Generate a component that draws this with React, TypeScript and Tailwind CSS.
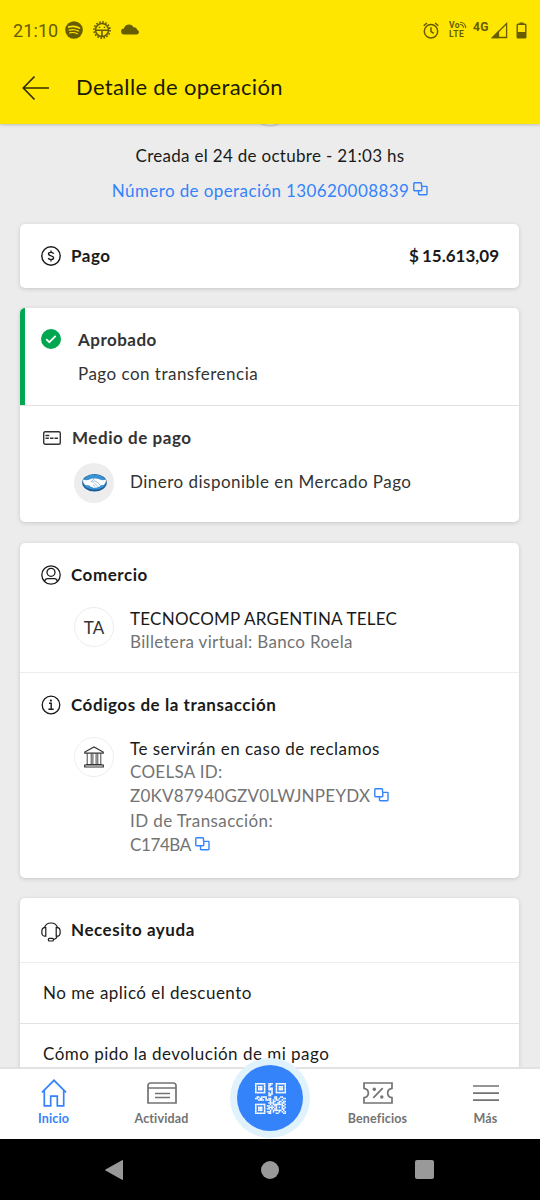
import type { ReactNode } from 'react';

function CopyIcon({ className = '' }: { className?: string }) {
  return (
    <svg className={className} width="15" height="14" viewBox="0 0 15 14" fill="none" stroke="#3483fa" strokeWidth="1.4">
      <path d="M5 8.7H1.5a.7.7 0 0 1-.7-.7V1.5a.7.7 0 0 1 .7-.7h6.3a.7.7 0 0 1 .7.7v2.7" />
      <path d="M8.8 4.4h4.5a.7.7 0 0 1 .7.7v7a.7.7 0 0 1-.7.7H6.2a.7.7 0 0 1-.7-.7V8.7h2.6a.7.7 0 0 0 .7-.7z" />
    </svg>
  );
}

function MoneyIcon() {
  return (
    <svg width="20" height="20" viewBox="0 0 20 20" fill="none" stroke="#1a1a1a" strokeWidth="1.4">
      <circle cx="10" cy="10" r="9.2" />
      <path d="M12.6 7.900c-.3-1-1.300-1.500-2.600-1.500-1.500 0-2.500.6-2.500 1.700 0 1.200 1.200 1.500 2.500 1.800s2.600.7 2.600 1.900c0 1.100-1.100 1.800-2.600 1.800-1.400 0-2.400-.6-2.700-1.600M10 4.600v1.800M10 13.600v1.800" />
    </svg>
  );
}

function CheckIcon() {
  return (
    <svg width="20" height="20" viewBox="0 0 20 20" fill="none">
      <circle cx="10" cy="10" r="10" fill="#00a650" />
      <path d="m5.200 10.100 3.100 3.100 6.400-6.300" stroke="#fff" strokeWidth="1.700" />
    </svg>
  );
}

function CardIcon() {
  return (
    <svg className="mr-px" width="18" height="14" viewBox="0 0 18 14" fill="none" stroke="#333" strokeWidth="1.400">
      <rect x=".7" y=".7" width="16.600" height="12.600" rx="1.500" />
      <path d="M2.500 4.500h3.800M2.500 7.300h3.400M7 7.300h3.500M11.500 7.300H15" strokeWidth="1.400" />
    </svg>
  );
}

function UserIcon() {
  return (
    <svg width="20" height="20" viewBox="0 0 20 20" fill="none" stroke="#1a1a1a" strokeWidth="1.300">
      <circle cx="10" cy="10" r="9.200" />
      <circle cx="10" cy="7.300" r="4" />
      <path d="M3.600 16.300c.4-1.700 1.400-2.700 3-2.700h6.800c1.600 0 2.600 1 3 2.700" />
    </svg>
  );
}

function InfoIcon() {
  return (
    <svg width="20" height="20" viewBox="0 0 20 20" fill="none" stroke="#1a1a1a" strokeWidth="1.300">
      <circle cx="10" cy="10" r="8.800" />
      <path d="M8 8.300h2.200v5.600M7.400 14.200h5.300" strokeWidth="1.400" />
      <circle cx="9.900" cy="5.600" r="1.100" fill="#1a1a1a" stroke="none" />
    </svg>
  );
}

function HeadsetIcon() {
  return (
    <svg className="mt-[3px]" width="20" height="20" viewBox="0 0 20 20" fill="none" stroke="#1a1a1a" strokeWidth="1.200">
      <path d="M3.400 5.700C4.300 2.800 6.800 1 10 1s5.700 1.800 6.600 4.700" />
      <path d="M4.800 5.600v8.500H3.600C1.800 14.100.8 12.400.8 9.900s1-4.300 2.800-4.300zM15.200 5.600v8.500h1.200c1.800 0 2.800-1.700 2.800-4.200s-1-4.300-2.800-4.300z" />
      <path d="M16.300 14.200c-.6 1.700-1.900 2.900-3.800 3.300" />
      <rect x="7.300" y="16.300" width="5.200" height="2.700" rx="1.300" />
    </svg>
  );
}

function BankIcon() {
  return (
    <svg width="20" height="22" viewBox="0 0 20 22" fill="none" stroke="#333">
      <path d="M.8 7.200V6L10 1l9.200 5v1.200zM.7 21v-2h18.600v2z" strokeWidth="1.200" />
      <path d="M2 18.500h16" strokeWidth="1" />
      <path d="M3.200 7.500v11M7.200 7.500v11M8.900 7.500v11M12.100 7.500v11M13.800 7.500v11M16.800 7.500v11" strokeWidth=".9" />
    </svg>
  );
}

function HandshakeLogo() {
  return (
    <svg className="-mt-px" width="25" height="19" viewBox="0 0 26 19">
      <ellipse cx="13" cy="9.700" rx="12.800" ry="9.100" fill="#1c5c9c" />
      <ellipse cx="13" cy="9" rx="11.800" ry="7.900" fill="#3a92d0" />
      <path d="M1.300 6.500c2.600 1 4.700.7 7.200-.5 1.300-.6 2.600-.8 4-.3 1.500-.6 3-.4 4.500.2 2.700 1.100 5 1.600 7.700.6.6 2-.3 4-2 5.500l-3.400.3c-.4 1.500-1.700 1.900-2.700 1.600-.7 1.200-2 1.500-3 .8-1.300.8-2.300.4-2.900-.5-1.300.3-2.400-.3-2.700-1.500l-4.400-.6C1.500 10.800.8 8.700 1.300 6.500z" fill="#fff" />
      <path d="M12.500 6c-1.300.7-2 1.600-2.800 2.600 1.300.9 2.700.3 3.600-.8 2 .7 4.200 2.700 5.800 4.500M13 10.300l3 2.700M11.500 11.800l2.200 2.200" fill="none" stroke="#2a6cae" strokeWidth=".5" />
    </svg>
  );
}

function SpotifyIcon() {
  return (
    <svg width="18" height="18" viewBox="0 0 18 18" fill="none">
      <circle cx="9" cy="9" r="8.800" fill="#665c00" />
      <path d="M3.600 6.100c3.700-1.100 7.700-.8 11 1" stroke="#ffe600" strokeWidth="1.600" strokeLinecap="round" />
      <path d="M4.200 9.100c3.200-.9 6.500-.6 9.300.9" stroke="#ffe600" strokeWidth="1.300" strokeLinecap="round" />
      <path d="M4.700 11.900c2.700-.7 5.300-.4 7.700.8" stroke="#ffe600" strokeWidth="1.100" strokeLinecap="round" />
    </svg>
  );
}

function GearIcon() {
  return (
    <svg width="18" height="18" viewBox="0 0 18 18" fill="none" stroke="#665c00">
      <circle cx="9" cy="9" r="8" strokeWidth="1.800" strokeDasharray="1.570 1.570" />
      <circle cx="9" cy="9" r="6.500" strokeWidth="1.500" />
      <path d="M2.500 9.300h13M9 9.300v6.200" strokeWidth="1.600" />
      <path d="M5.700 6.300h1.600M10.700 6.300h1.600" strokeWidth="1.300" />
    </svg>
  );
}

function StatusBar() {
  return (
    <div className="flex h-[60px] items-center px-[13px] text-[#665c00]">
      <span className="mt-[2px] w-[52px] whitespace-nowrap font-[Roboto,sans-serif] text-[18px] leading-6 tracking-[0.1px]">21:10</span>
      <SpotifyIcon />
      <div className="ml-[10px]">
        <GearIcon />
      </div>
      <svg className="ml-[10px] mt-[-2px]" width="18" height="11" viewBox="0 0 18 11" fill="#665c00">
        <path d="M3.200 10.400a2.900 2.900 0 0 1-.3-5.800C3.600 2 5.700.5 8 .5c2.100 0 3.800 1.200 4.600 3 .4-.2.9-.2 1.300-.1 1.300.2 2 1.200 2.100 2.400 1.200.3 1.900 1.300 1.900 2.400 0 1.300-1 2.200-2.300 2.200z" />
      </svg>
      <div className="ml-auto flex items-center">
        <svg width="16" height="17" viewBox="0 0 16 17" fill="none" stroke="#665c00" strokeWidth="1.500">
          <circle cx="8" cy="9.300" r="6.700" />
          <path d="M8 5.300v4.200l2.800 1.900M.7 3.700 3.900 1M15.300 3.700 12.100 1" />
        </svg>
        <div className="relative ml-[10px] w-[18px] font-[Roboto,sans-serif] text-[8.5px] font-bold leading-[9px]">
          <div>Vo</div>
          <div>LTE</div>
          <svg className="absolute left-[10px] top-0" width="8" height="8" viewBox="0 0 8 8" fill="none" stroke="#665c00" strokeWidth="1.100">
            <path d="M1 1.300c3.200 0 5.600 2.300 5.700 5.700M1.200 3.500c1.900 0 3.200 1.300 3.300 3.300" />
          </svg>
        </div>
        <span className="-mt-[7px] ml-[6px] w-[18px] font-[Roboto,sans-serif] text-[12px] font-bold leading-3">4G</span>
        <svg width="17" height="17" viewBox="0 0 17 17" fill="none" stroke="#665c00" strokeWidth="1.300">
          <path d="M15.600 1.500v14H1.600z" />
          <path d="M7.500 9.600v5.900H1.600z" fill="#665c00" />
        </svg>
        <svg className="ml-[8px]" width="11" height="17" viewBox="0 0 11 17" fill="none">
          <path d="M3.500.5h4v2h-4z" fill="#665c00" />
          <rect x="1.200" y="2.200" width="8.600" height="13.600" rx=".8" stroke="#665c00" strokeWidth="1.400" />
          <path d="M1 10h9v6H1z" fill="#665c00" />
        </svg>
      </div>
    </div>
  );
}

function Header() {
  return (
    <header className="relative z-10 h-[124px] bg-[#ffe600] shadow-[0_1px_3px_rgba(0,0,0,0.2)]">
      <StatusBar />
      <div className="flex h-14 items-center pl-[22px]">
        <svg width="28" height="26" viewBox="0 0 28 26" fill="none" stroke="#332e00" strokeWidth="1.700">
          <path d="M27 13H1.500M12.500 1.500 1.300 13l11.200 11.500" />
        </svg>
        <h1 className="-mt-[2px] ml-[26px] whitespace-nowrap text-[22px] leading-7 tracking-[0.35px] text-[#1a1a00]">Detalle de operación</h1>
      </div>
    </header>
  );
}

function Card({ className = '', children }: { className?: string; children: ReactNode }) {
  return (
    <section className={`mr-[21px] ml-5 overflow-hidden rounded-[5px] bg-white shadow-[0_1px_4px_rgba(0,0,0,0.16)] ${className}`}>
      {children}
    </section>
  );
}

function SectionTitle({ icon, children }: { icon: ReactNode; children: ReactNode }) {
  return (
    <div className="flex items-center pl-[21px]">
      {icon}
      <h2 className="ml-[10px] font-bold leading-6 tracking-[0.55px]">{children}</h2>
    </div>
  );
}

function Avatar({ className = '', children }: { className?: string; children: ReactNode }) {
  return (
    <div className={`ml-[54px] flex size-10 shrink-0 items-center justify-center rounded-full ${className}`}>{children}</div>
  );
}

const QR_ROWS = [
  '111111100111001111111',
  '100000100110001000001',
  '101110100100001011101',
  '101110100111001011101',
  '101110100111001011101',
  '100000100001001000001',
  '111111100101001111111',
  '000000000111000000000',
  '000000000110000000000',
  '011011110000011001100',
  '110110010110011010011',
  '001111011110101100100',
  '000000000010110011011',
  '000000000111100110110',
  '111111100010111111101',
  '100000101101011000110',
  '101110100111101010101',
  '101110101101011000110',
  '101110100010111111010',
  '100000101110100010101',
  '111111100110001100011',
];

function QrIcon() {
  return (
    <svg width="31" height="31" viewBox="0 0 21 21" fill="#fff">
      {QR_ROWS.map((row, y) =>
        row.split('').map((bit, x) => (bit === '1' ? <rect key={`${x}-${y}`} x={x} y={y} width="1.05" height="1.05" /> : null)),
      )}
    </svg>
  );
}

function NavItem({ icon, label, active = false }: { icon: ReactNode; label: string; active?: boolean }) {
  return (
    <div className={`flex flex-col items-center pr-px ${active ? 'text-[#3483fa]' : 'text-[#737373]'}`}>
      <div className="flex h-[42px] items-center pt-[5px]">{icon}</div>
      <span className="text-[12.5px] font-bold leading-4 tracking-[0.15px]">{label}</span>
    </div>
  );
}

function BottomNav() {
  return (
    <nav className="relative grid h-[72px] grid-cols-5 border-t-2 border-[#e2e2e2] bg-white">
      <NavItem
        active
        label="Inicio"
        icon={
          <svg width="26" height="28" viewBox="0 0 26 28" fill="none" stroke="currentColor" strokeWidth="1.700">
            <path d="M1 13.300 13 1.300l12 12M3.300 11.500v15.300h6.400v-9.600h6.600v9.600h6.400V11.500" />
          </svg>
        }
      />
      <NavItem
        label="Actividad"
        icon={
          <svg width="30" height="22" viewBox="0 0 30 22" fill="none" stroke="currentColor" strokeWidth="1.700">
            <path d="M1 21V3.500A2.500 2.500 0 0 1 3.500 1h23A2.500 2.500 0 0 1 29 3.500V21zM1 6h28M8 11.500h15M8 15.500h15" />
          </svg>
        }
      />
      <div />
      <NavItem
        label="Beneficios"
        icon={
          <svg width="30" height="22" viewBox="0 0 30 22" fill="none" stroke="currentColor" strokeWidth="1.700">
            <path d="M1 1h28v5.300c-5.800.9-5.800 8.500 0 9.400V21H1v-5.300c5.800-.9 5.800-8.500 0-9.400zM10.300 15.800l9.400-9.600" />
            <circle cx="11.300" cy="7.200" r="1.700" fill="currentColor" stroke="none" />
            <circle cx="18.800" cy="15" r="1.700" fill="currentColor" stroke="none" />
          </svg>
        }
      />
      <NavItem
        label="Más"
        icon={
          <svg width="26" height="18" viewBox="0 0 26 18" fill="none" stroke="currentColor" strokeWidth="1.700">
            <path d="M0 2h26M0 9.200h26M0 16.200h26" />
          </svg>
        }
      />
      <div className="absolute -top-[11px] left-[230px] flex size-20 items-center justify-center rounded-full bg-[#e0f2fc]">
        <div className="flex size-[66px] items-center justify-center rounded-full bg-[#3483fa]">
          <QrIcon />
        </div>
      </div>
    </nav>
  );
}

function SystemBar() {
  return (
    <div className="grid h-[61px] grid-cols-[228px_84px_228px] items-center justify-items-center bg-black">
      <svg width="20" height="22" viewBox="0 0 20 22" fill="#999">
        <path d="M18 1.200c.6-.3 1 0 1 .6v18.400c0 .6-.4.9-1 .6L1.500 11.600c-.6-.4-.6-.8 0-1.200z" />
      </svg>
      <div className="size-[18px] rounded-full bg-[#999]" />
      <div className="ml-[-4px] size-[19px] rounded-[2px] bg-[#999]" />
    </div>
  );
}

export default function App() {
  return (
    <div className="flex h-[1200px] w-[540px] flex-col overflow-hidden bg-[#ececec] font-[Lato,sans-serif] text-[17px] leading-6 tracking-[0.48px] text-[#1a1a1a]">
      <Header />

      <main className="relative h-[943px] overflow-hidden">
        <div className="absolute -top-[39px] left-[250px] size-10 rounded-full bg-[#f5f5f5] shadow-[0_1px_2px_rgba(0,0,0,0.2)]" />
        <p className="mt-5 text-center tracking-[0.3px]">Creada el 24 de octubre - 21:03 hs</p>
        <p className="mt-[11px] flex justify-center tracking-[0.4px] text-[#3483fa]">
          Número de operación 130620008839
          <CopyIcon className="ml-1 mt-[3px]" />
        </p>

        <Card className="mt-[21px] flex h-16 items-center justify-between pr-5">
          <SectionTitle icon={<MoneyIcon />}>Pago</SectionTitle>
          <span className="font-bold tracking-normal [word-spacing:-1px]">$ 15.613,09</span>
        </Card>

        <Card className="mt-5 h-[214px] text-[#333]">
          <div className="flex h-[97px] border-l-[5px] border-[#00a650] pl-[16px] pt-5">
            <div className="mt-px">
              <CheckIcon />
            </div>
            <div className="ml-[17px]">
              <h2 className="font-bold">Aprobado</h2>
              <p className="mt-[10px]">Pago con transferencia</p>
            </div>
          </div>
          <div className="border-t border-[#e2e2e2] pt-5">
            <div className="pl-[2px]">
              <SectionTitle icon={<CardIcon />}>Medio de pago</SectionTitle>
            </div>
            <div className="mt-[13px] flex">
              <Avatar className="bg-[#ededed]">
                <HandshakeLogo />
              </Avatar>
              <p className="ml-4 mt-[7px]">Dinero disponible en Mercado Pago</p>
            </div>
          </div>
        </Card>

        <Card className="mt-[21px] h-[335px]">
          <div className="h-[129px] pt-5">
            <SectionTitle icon={<UserIcon />}>Comercio</SectionTitle>
            <div className="mt-5 flex leading-[23px]">
              <Avatar className="border border-[#ededed] tracking-normal text-[#333]">TA</Avatar>
              <div className="ml-4">
                <p className="tracking-[0.25px]">TECNOCOMP ARGENTINA TELEC</p>
                <p className="tracking-[0.33px] text-[#737373]">Billetera virtual: Banco Roela</p>
              </div>
            </div>
          </div>
          <div className="border-t border-[#ededed] pt-5">
            <SectionTitle icon={<InfoIcon />}>Códigos de la transacción</SectionTitle>
            <div className="mt-5 flex leading-[23px]">
              <Avatar className="border border-[#ededed]">
                <BankIcon />
              </Avatar>
              <div className="ml-4 text-[#737373]">
                <p className="text-[#1a1a1a]">Te servirán en caso de reclamos</p>
                <p className="tracking-[0.3px]">COELSA ID:</p>
                <div className="mt-px leading-[24.5px]">
                  <p className="flex tracking-[0.25px]">
                    Z0KV87940GZV0LWJNPEYDX
                    <CopyIcon className="ml-1 mt-[4px]" />
                  </p>
                  <p className="tracking-[0.4px]">ID de Transacción:</p>
                  <p className="flex tracking-[-0.4px]">
                    C174BA
                    <CopyIcon className="ml-1 mt-[4px]" />
                  </p>
                </div>
              </div>
            </div>
          </div>
        </Card>

        <Card className="mt-5 h-[200px]">
          <div className="flex h-16 items-center">
            <SectionTitle icon={<HeadsetIcon />}>Necesito ayuda</SectionTitle>
          </div>
          <p className="flex h-[61px] items-center border-t border-[#ededed] pl-[23px]">No me aplicó el descuento</p>
          <p className="flex h-[61px] items-center border-t border-[#e2e2e2] pl-[23px]">Cómo pido la devolución de mi pago</p>
        </Card>
      </main>

      <BottomNav />
      <SystemBar />
    </div>
  );
}
